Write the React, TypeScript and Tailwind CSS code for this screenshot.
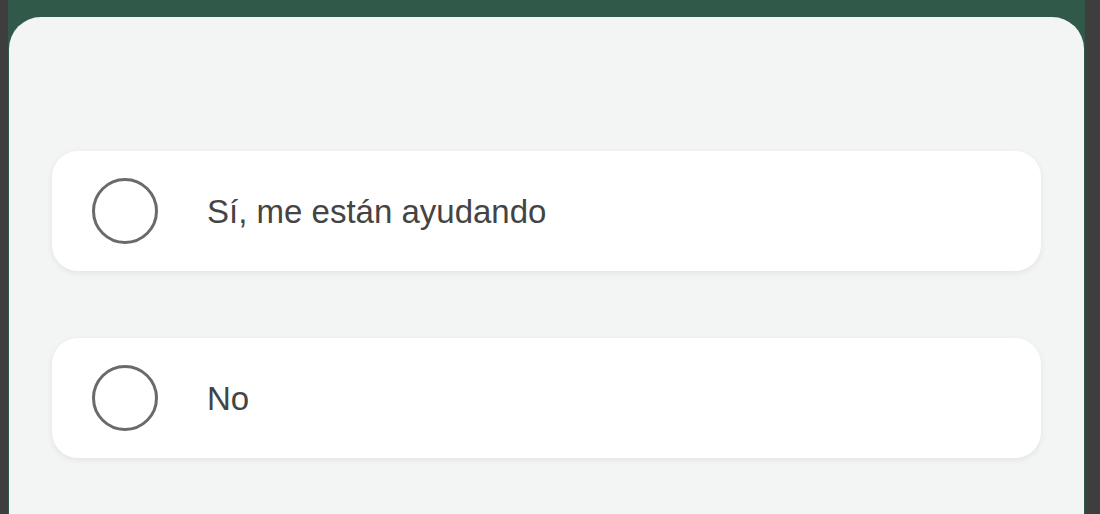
import React from "react";

function Option({ label }: { label: string }) {
  return (
    <div className="flex h-[120px] items-center rounded-[26px] bg-white pl-[40px] shadow-[0_2px_6px_rgba(0,0,0,0.07)]">
      <div className="h-[66px] w-[66px] shrink-0 rounded-full border-[3px] border-[#6a6a6a] bg-white" />
      <span className="ml-[49px] text-[33px] leading-none text-[#444444]" style={{ fontFamily: '"Liberation Sans", Arial, sans-serif' }}>
        {label}
      </span>
    </div>
  );
}

export default function App() {
  return (
    <div className="flex h-[514px] w-[1100px] overflow-hidden bg-[#3e3e3e]">
      <div className="ml-[8px] flex w-[1077px] flex-col bg-[#30594a]">
        <div className="mt-[17px] ml-[1px] mr-[1px] flex flex-1 flex-col rounded-t-[32px] bg-[#f3f4f4] px-[43px] pt-[134px]">
          <div className="flex flex-col gap-[67px]">
            <Option label="Sí, me están ayudando" />
            <Option label="No" />
          </div>
        </div>
      </div>
    </div>
  );
}
